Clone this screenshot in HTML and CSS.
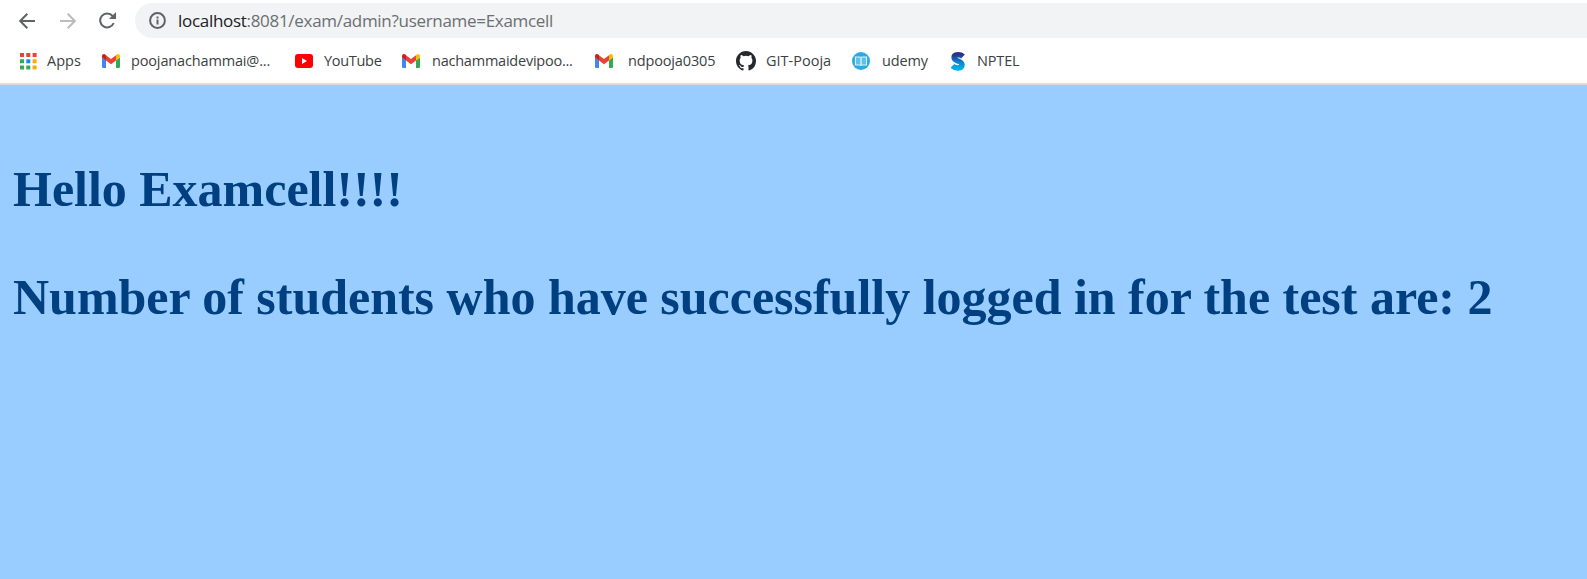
FILE: index.html
```
<!DOCTYPE html>
<html lang="en">
<head>
<meta charset="utf-8">
<title>Exam admin</title>
<link rel="stylesheet" href="styles.css">
</head>
<body>
<svg class="defs" width="0" height="0" aria-hidden="true">
  <defs>
    <symbol id="gmail" viewBox="0 0 18 14">
      <path fill="#4285f4" d="M0 3.2l4 3V14H1.3A1.3 1.3 0 0 1 0 12.7z"/>
      <path fill="#34a853" d="M14 6.2l4-3v9.5a1.3 1.3 0 0 1-1.3 1.3H14z"/>
      <path fill="#ea4335" d="M4 1.2l5 3.8 5-3.8v5.2l-5 3.8-5-3.8z"/>
      <path fill="#c5221f" d="M0 2.2C0 .2 2.1-.6 3.6.8L4 1.2v5.2L0 3.5z"/>
      <path fill="#fbbc04" d="M18 2.2c0-2-2.1-2.8-3.6-1.4l-.4.4v5.2l4-2.9z"/>
    </symbol>
    <linearGradient id="sfill" x1="0" y1="0" x2="0" y2="1">
      <stop offset="0" stop-color="#27348b"/><stop offset=".45" stop-color="#0b78c4"/><stop offset="1" stop-color="#00aeea"/>
    </linearGradient>
  </defs>
</svg>
<header class="browser">
  <div class="toolbar">
    <svg class="nav" viewBox="0 0 16 16"><path d="M16 8H1.5M8.3.8L1.2 8l7.1 7.2"/></svg>
    <svg class="nav forward" viewBox="0 0 16 16"><path d="M0 8h14.5M7.7.8L14.8 8l-7.1 7.2"/></svg>
    <svg class="reload" viewBox="0 0 18 17"><path d="M14.7 11A7 7 0 1 1 13.6 4" fill="none" stroke="#5f6368" stroke-width="2"/><path d="M17 0v7h-7z" fill="#5f6368"/></svg>
    <div class="address">
      <svg class="info" viewBox="0 0 17 17"><circle cx="8.5" cy="8.5" r="7.4" fill="none" stroke="#5f6368" stroke-width="2"/><path d="M7.5 7.500h2v5h-2zM7.500 4.400h2v2h-2z" fill="#5f6368"/></svg>
      <span class="url"><span class="host">localhost</span>:8081/exam/admin?username=Examcell</span>
    </div>
  </div>
  <nav class="bookmarks">
    <a class="mark apps"><svg class="icon" viewBox="0 0 17 17"><path fill="#ea4335" d="M0 0h4v4H0zM6.3 0h4v4h-4zM12.6 0h4v4h-4z"/><path fill="#34a853" d="M0 6.3h4v4H0zM0 12.6h4v4H0zM6.3 12.6h4v4h-4z"/><path fill="#1a86f5" d="M6.3 6.3h4v4h-4z"/><path fill="#fbab04" d="M12.6 6.3h4v4h-4zM12.6 12.6h4v4h-4z"/></svg><span>Apps</span></a>
    <a class="mark mail1"><svg class="icon"><use href="#gmail"/></svg><span>poojanachammai@...</span></a>
    <a class="mark youtube"><svg class="icon" viewBox="0 0 18 14"><rect width="18" height="14" rx="3" fill="#f00"/><path d="M7 4l5 3-5 3z" fill="#fff"/></svg><span>YouTube</span></a>
    <a class="mark mail2"><svg class="icon"><use href="#gmail"/></svg><span>nachammaidevipoo...</span></a>
    <a class="mark mail3"><svg class="icon"><use href="#gmail"/></svg><span>ndpooja0305</span></a>
    <a class="mark github"><svg class="icon" viewBox="0 0 16 16"><path fill="#24292e" d="M8 0C3.58 0 0 3.58 0 8c0 3.54 2.29 6.53 5.47 7.59.4.07.55-.17.55-.38 0-.19-.01-.82-.01-1.49-2.01.37-2.53-.49-2.69-.94-.09-.23-.48-.94-.82-1.13-.28-.15-.68-.52-.01-.53.63-.01 1.08.58 1.23.82.72 1.21 1.87.87 2.33.66.07-.52.28-.87.51-1.07-1.78-.2-3.64-.89-3.64-3.95 0-.87.31-1.59.82-2.15-.08-.2-.36-1.02.08-2.12 0 0 .67-.21 2.2.82a7.6 7.6 0 0 1 4 0c1.53-1.04 2.2-.82 2.2-.82.44 1.1.16 1.92.08 2.12.51.56.82 1.27.82 2.15 0 3.07-1.87 3.75-3.65 3.95.29.25.54.73.54 1.48 0 1.07-.01 1.93-.01 2.2 0 .21.15.46.55.38A8 8 0 0 0 16 8c0-4.42-3.58-8-8-8z"/></svg><span>GIT-Pooja</span></a>
    <a class="mark udemy"><svg class="icon" viewBox="0 0 18 18"><circle cx="9" cy="9" r="9" fill="#29abe2"/><path d="M3.500 5h4Q9 5 9 5.800 9 5 10.500 5h4v8h-4Q9 13 9 13.800 9 13 7.500 13h-4z" fill="#5cc0e9" stroke="#d9f1fb" stroke-width="1.100"/><path d="M9 5.500v8" stroke="#d9f1fb" stroke-width="1.400"/></svg><span>udemy</span></a>
    <a class="mark nptel"><svg class="icon" viewBox="0 0 14 19"><path d="M12 4.500C9.600 2.300 3.200 2 3.100 5.500 3 9.600 11 8.500 11 12.800c0 4.100-6.800 4-9.600 1.100" fill="none" stroke="url(#sfill)" stroke-width="5.500"/></svg><span>NPTEL</span></a>
  </nav>
</header>
<main class="page">
  <h1 class="message">Hello Examcell!!!!</h1>
  <h1 class="message">Number of students who have successfully logged in for the test are: 2</h1>
</main>
</body>
</html>
```
FILE: styles.css
```
body { margin: 0; height: 579px; display: flex; flex-direction: column; overflow: hidden; background: #99ccff; }
.defs { display: block; position: absolute; }
.browser { box-sizing: border-box; height: 85px; flex: none; background: #fff; border-bottom: 2px solid #d9dbdf; padding-top: 3px; font-family: "Open Sans", "Noto Sans", sans-serif; }
.toolbar { display: flex; align-items: center; height: 35px; padding-left: 19px; }
.nav { width: 16px; height: 16px; margin-right: 25px; fill: none; stroke: #5f6368; stroke-width: 2; }
.forward { stroke: #babcbe; margin-right: 23px; }
.reload { width: 18px; height: 17px; margin-right: 18px; }
.address { flex: 1; height: 35px; display: flex; align-items: center; background: #f1f3f4; border-radius: 18px 0 0 18px; padding-left: 14px; }
.info { width: 17px; height: 17px; margin-right: 12px; }
.url { font-size: 17px; line-height: 24px; color: #6b6f73; white-space: nowrap; letter-spacing: -0.3px; }
.host { color: #202124; }
.bookmarks { display: flex; align-items: center; height: 46px; padding-left: 20px; color: #3c4043; font-size: 14.5px; line-height: 20px; letter-spacing: -0.15px; }
.mark { display: flex; align-items: center; white-space: nowrap; flex: none; }
.icon { width: 18px; height: 14px; margin-right: 12px; flex: none; }
.apps { width: 82px; letter-spacing: 0; }
.apps .icon { width: 17px; height: 17px; margin-right: 10px; }
.mail1 { width: 193px; }
.mail1 .icon, .youtube .icon { margin-right: 11px; }
.youtube { width: 107px; letter-spacing: -0.3px; }
.mail2 { width: 193px; letter-spacing: -0.23px; }
.mail3 { width: 141px; }
.mail3 .icon { margin-right: 15px; }
.github { width: 116px; letter-spacing: 0; }
.github .icon { width: 20px; height: 20px; margin-right: 10px; }
.udemy { width: 99px; }
.udemy .icon { height: 18px; }
.nptel .icon { width: 14px; height: 19px; }
.page { padding: 76px 13px 0; }
.message { margin: 0 0 51px; font: bold 50px/57px "Liberation Serif", serif; letter-spacing: -0.015px; color: #004080; white-space: nowrap; }
```
